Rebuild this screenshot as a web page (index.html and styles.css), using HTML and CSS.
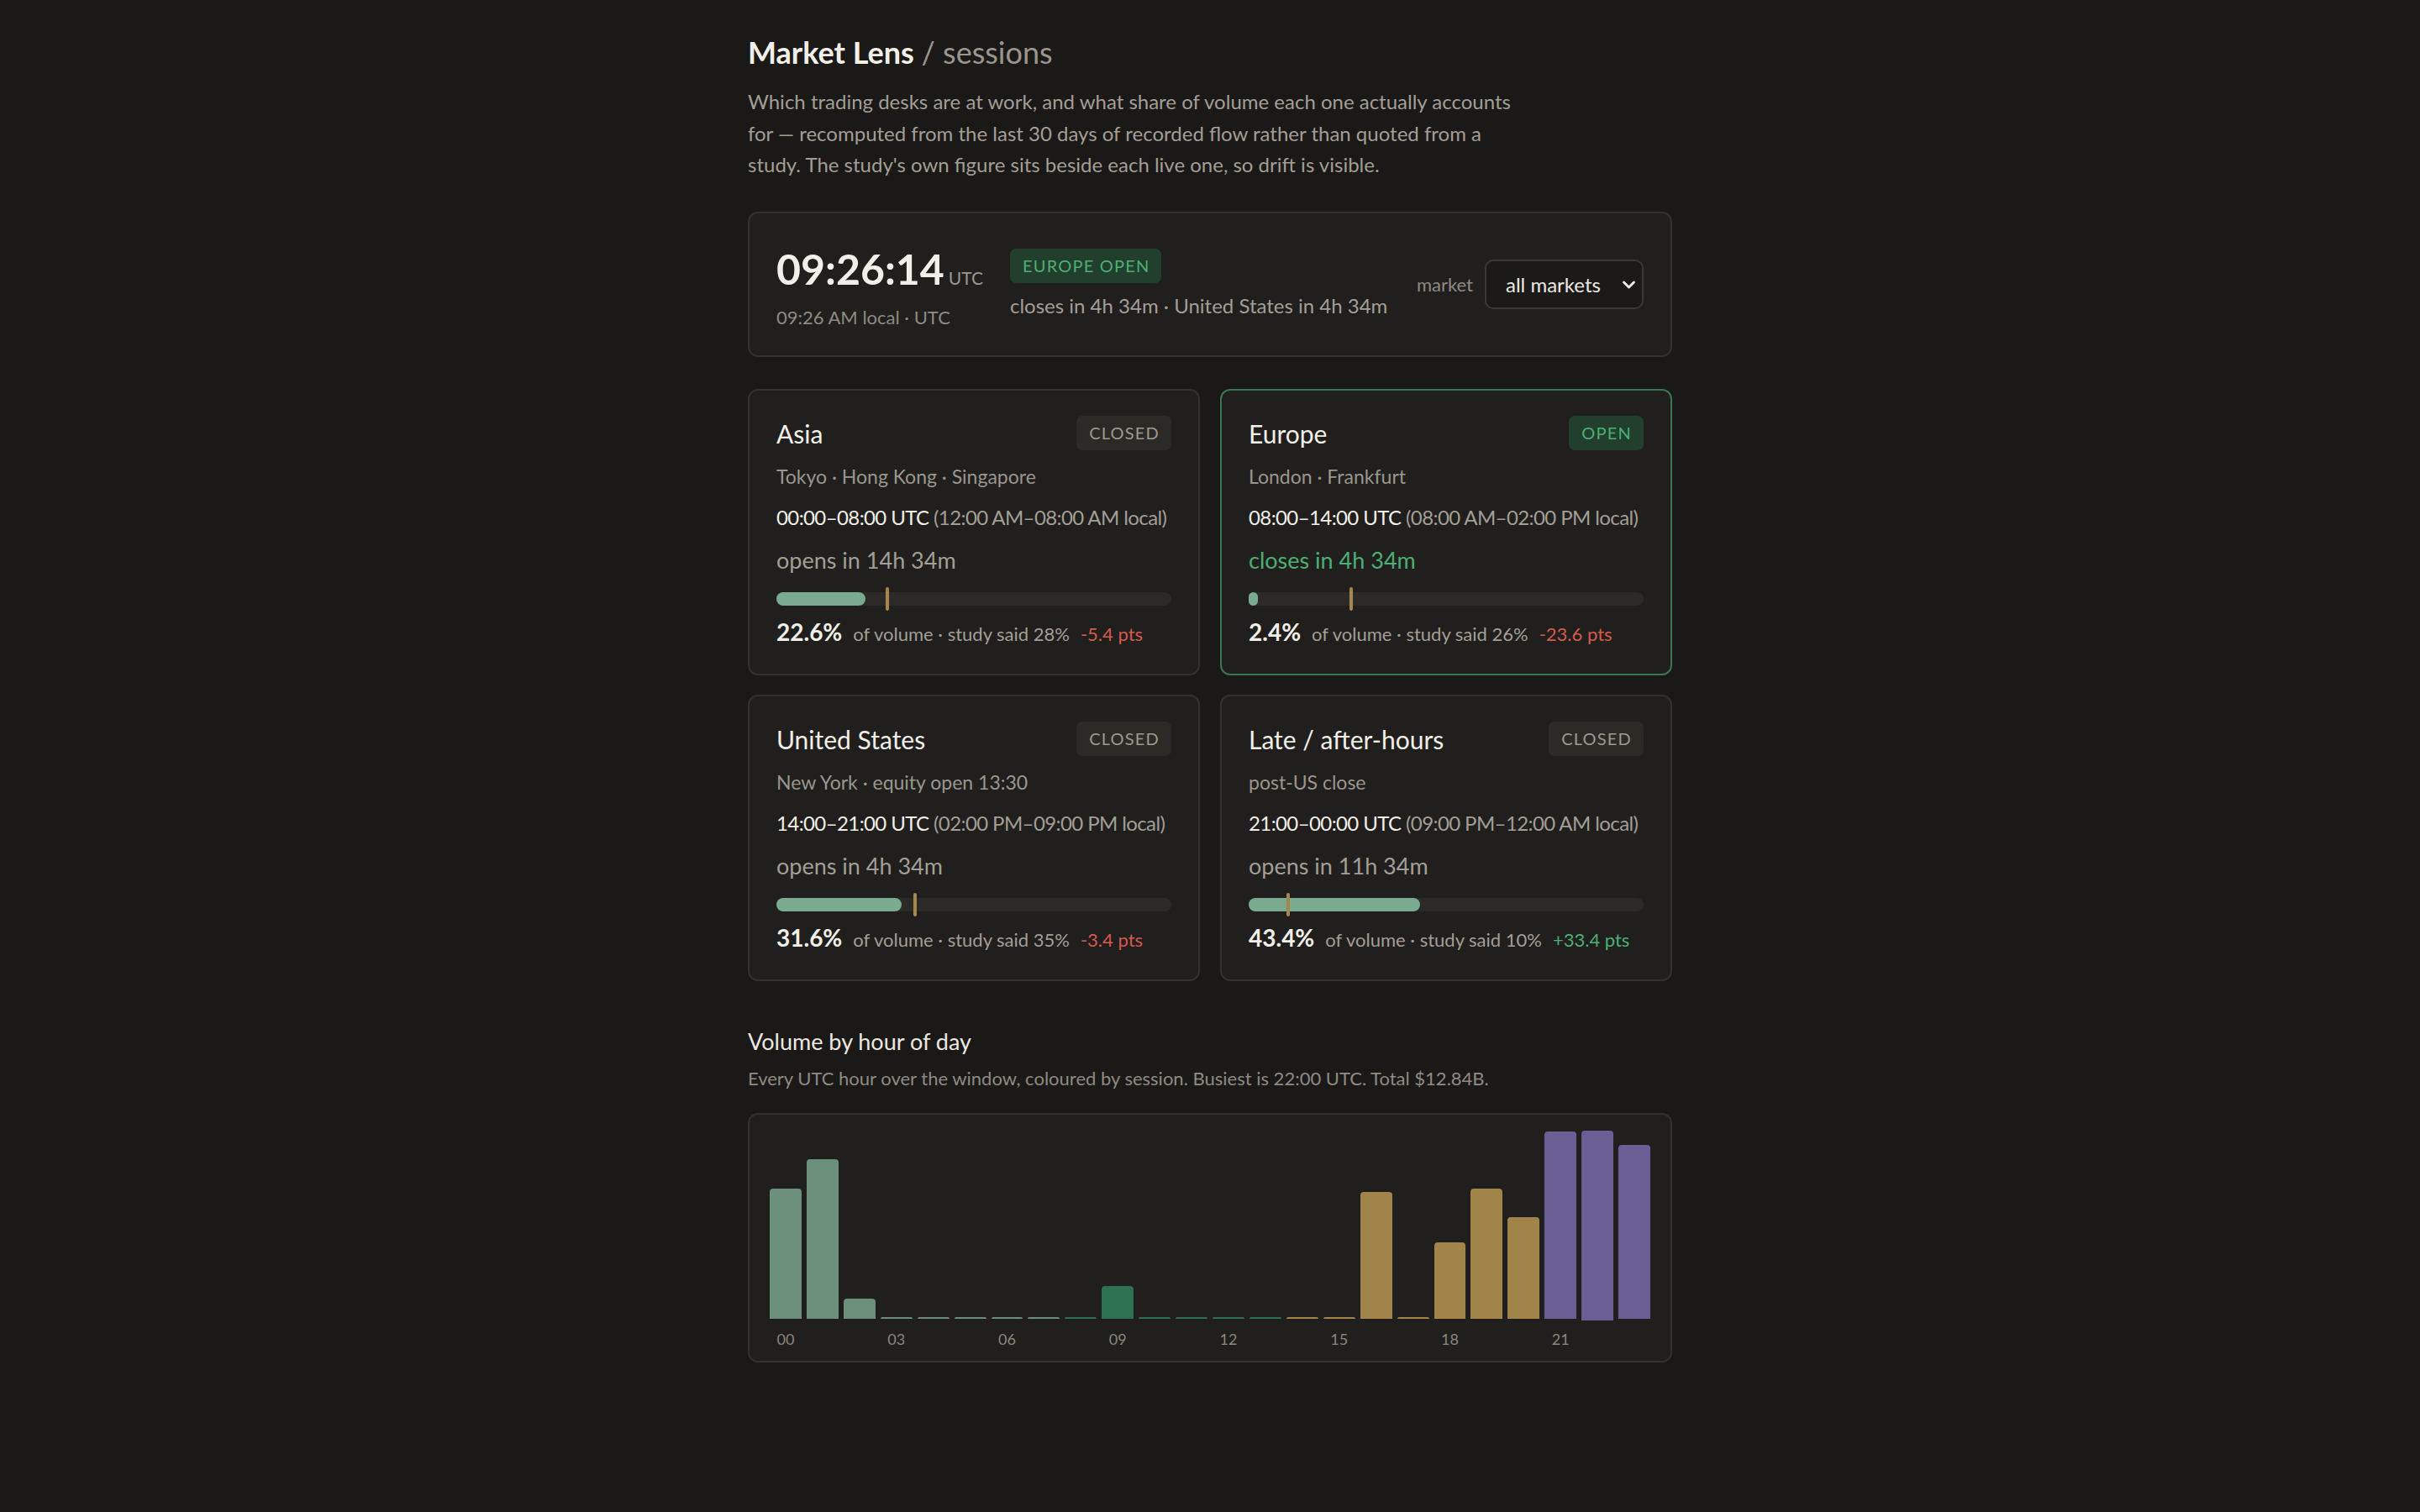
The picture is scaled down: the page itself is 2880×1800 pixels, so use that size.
FILE: index.html
```html
<!DOCTYPE html>
<html lang="en">
<head>
<meta charset="utf-8">
<title>Market Lens / sessions</title>
<link rel="stylesheet" href="styles.css">
</head>
<body>
<main class="page">
  <header class="intro">
    <h1 class="title">Market Lens <span class="title-sub">/ sessions</span></h1>
    <p class="lede">Which trading desks are at work, and what share of volume each one actually accounts for — recomputed from the last 30 days of recorded flow rather than quoted from a study. The study's own figure sits beside each live one, so drift is visible.</p>
  </header>

  <section class="panel clock-panel">
    <div class="clock">
      <div class="clock-time"><span class="clock-digits">09:26:14</span><span class="clock-zone">UTC</span></div>
      <div class="clock-local">09:26 AM local · UTC</div>
    </div>
    <div class="status">
      <span class="badge badge-open">Europe open</span>
      <div class="status-note">closes in 4h 34m · United States in 4h 34m</div>
    </div>
    <label class="market">
      <span class="market-label">market</span>
      <span class="select-wrap">
        <select class="select">
          <option>all markets</option>
          <option>Asia</option>
          <option>Europe</option>
          <option>United States</option>
          <option>Late / after-hours</option>
        </select>
        <svg class="chev" viewBox="0 0 17 12" aria-hidden="true"><path d="M2.5 3 L8.5 9 L14.5 3" fill="none" stroke="#ece8e0" stroke-width="3" stroke-linecap="round" stroke-linejoin="round"/></svg>
      </span>
    </label>
  </section>

  <section class="sessions">
    <article class="panel session">
      <div class="session-head">
        <h2 class="session-name">Asia</h2>
        <span class="badge badge-closed">Closed</span>
      </div>
      <div class="session-where">Tokyo · Hong Kong · Singapore</div>
      <div class="session-hours"><span class="hours-utc">00:00–08:00 UTC</span> (12:00 AM–08:00 AM local)</div>
      <div class="session-next">opens in 14h 34m</div>
      <div class="meter"><div class="meter-fill" style="width:22.6%"></div><div class="meter-mark" style="left:28%"></div></div>
      <div class="session-stat"><span class="stat-value">22.6%</span><span class="stat-text">of volume · study said 28%</span><span class="stat-delta neg">-5.4 pts</span></div>
    </article>

    <article class="panel session session-live">
      <div class="session-head">
        <h2 class="session-name">Europe</h2>
        <span class="badge badge-open">Open</span>
      </div>
      <div class="session-where">London · Frankfurt</div>
      <div class="session-hours"><span class="hours-utc">08:00–14:00 UTC</span> (08:00 AM–02:00 PM local)</div>
      <div class="session-next live">closes in 4h 34m</div>
      <div class="meter"><div class="meter-fill" style="width:2.4%"></div><div class="meter-mark" style="left:26%"></div></div>
      <div class="session-stat"><span class="stat-value">2.4%</span><span class="stat-text">of volume · study said 26%</span><span class="stat-delta neg">-23.6 pts</span></div>
    </article>

    <article class="panel session">
      <div class="session-head">
        <h2 class="session-name">United States</h2>
        <span class="badge badge-closed">Closed</span>
      </div>
      <div class="session-where">New York · equity open 13:30</div>
      <div class="session-hours"><span class="hours-utc">14:00–21:00 UTC</span> (02:00 PM–09:00 PM local)</div>
      <div class="session-next">opens in 4h 34m</div>
      <div class="meter"><div class="meter-fill" style="width:31.6%"></div><div class="meter-mark" style="left:35%"></div></div>
      <div class="session-stat"><span class="stat-value">31.6%</span><span class="stat-text">of volume · study said 35%</span><span class="stat-delta neg">-3.4 pts</span></div>
    </article>

    <article class="panel session">
      <div class="session-head">
        <h2 class="session-name">Late / after-hours</h2>
        <span class="badge badge-closed">Closed</span>
      </div>
      <div class="session-where">post-US close</div>
      <div class="session-hours"><span class="hours-utc">21:00–00:00 UTC</span> (09:00 PM–12:00 AM local)</div>
      <div class="session-next">opens in 11h 34m</div>
      <div class="meter"><div class="meter-fill" style="width:43.4%"></div><div class="meter-mark" style="left:10%"></div></div>
      <div class="session-stat"><span class="stat-value">43.4%</span><span class="stat-text">of volume · study said 10%</span><span class="stat-delta pos">+33.4 pts</span></div>
    </article>
  </section>

  <section class="volume">
    <h2 class="volume-title">Volume by hour of day</h2>
    <p class="volume-note">Every UTC hour over the window, coloured by session. Busiest is 22:00 UTC. Total $12.84B.</p>
    <div class="panel chart">
      <div class="hour"><div class="plot"><div class="bar asia" style="height:68.8%"></div></div><div class="lbl">00</div></div>
      <div class="hour"><div class="plot"><div class="bar asia" style="height:84.8%"></div></div><div class="lbl"></div></div>
      <div class="hour"><div class="plot"><div class="bar asia" style="height:10.7%"></div></div><div class="lbl"></div></div>
      <div class="hour"><div class="plot"><div class="bar asia" style="height:0.5%"></div></div><div class="lbl">03</div></div>
      <div class="hour"><div class="plot"><div class="bar asia" style="height:0.5%"></div></div><div class="lbl"></div></div>
      <div class="hour"><div class="plot"><div class="bar asia" style="height:0.5%"></div></div><div class="lbl"></div></div>
      <div class="hour"><div class="plot"><div class="bar asia" style="height:0.5%"></div></div><div class="lbl">06</div></div>
      <div class="hour"><div class="plot"><div class="bar asia" style="height:0.5%"></div></div><div class="lbl"></div></div>
      <div class="hour"><div class="plot"><div class="bar europe" style="height:0.5%"></div></div><div class="lbl"></div></div>
      <div class="hour"><div class="plot"><div class="bar europe" style="height:17%"></div></div><div class="lbl">09</div></div>
      <div class="hour"><div class="plot"><div class="bar europe" style="height:0.5%"></div></div><div class="lbl"></div></div>
      <div class="hour"><div class="plot"><div class="bar europe" style="height:0.5%"></div></div><div class="lbl"></div></div>
      <div class="hour"><div class="plot"><div class="bar europe" style="height:0.5%"></div></div><div class="lbl">12</div></div>
      <div class="hour"><div class="plot"><div class="bar europe" style="height:0.5%"></div></div><div class="lbl"></div></div>
      <div class="hour"><div class="plot"><div class="bar us" style="height:0.5%"></div></div><div class="lbl"></div></div>
      <div class="hour"><div class="plot"><div class="bar us" style="height:0.5%"></div></div><div class="lbl">15</div></div>
      <div class="hour"><div class="plot"><div class="bar us" style="height:67%"></div></div><div class="lbl"></div></div>
      <div class="hour"><div class="plot"><div class="bar us" style="height:0.5%"></div></div><div class="lbl"></div></div>
      <div class="hour"><div class="plot"><div class="bar us" style="height:40.2%"></div></div><div class="lbl">18</div></div>
      <div class="hour"><div class="plot"><div class="bar us" style="height:68.8%"></div></div><div class="lbl"></div></div>
      <div class="hour"><div class="plot"><div class="bar us" style="height:53.6%"></div></div><div class="lbl"></div></div>
      <div class="hour"><div class="plot"><div class="bar late" style="height:99.5%"></div></div><div class="lbl">21</div></div>
      <div class="hour"><div class="plot"><div class="bar late peak" style="height:100%"></div></div><div class="lbl"></div></div>
      <div class="hour"><div class="plot"><div class="bar late" style="height:92%"></div></div><div class="lbl"></div></div>
    </div>
  </section>
</main>
</body>
</html>
```

FILE: styles.css
```css
* { box-sizing: border-box; }

html, body {
  margin: 0;
  padding: 0;
}

body {
  background: #1a1917;
  color: #efebe4;
  font-family: Lato, "Noto Sans", sans-serif;
  -webkit-font-smoothing: antialiased;
}

.page {
  width: 1100px;
  margin: 0 auto;
  padding: 40px 0 80px;
}

/* header */
.title {
  margin: 0;
  font-size: 36px;
  line-height: 44px;
  font-weight: 700;
  color: #f2efe8;
}

.title-sub {
  font-weight: 400;
  color: #9b968d;
}

.lede {
  margin: 18px 0 0;
  max-width: 940px;
  font-size: 24px;
  line-height: 37.5px;
  color: #a39e95;
}

/* panels */
.panel {
  background: #201f1d;
  border: 2px solid #33312e;
  border-radius: 12px;
}

.clock-panel {
  margin-top: 37px;
  display: flex;
  align-items: center;
  gap: 32px;
  padding: 31px 32px 30px;
}

.clock-time {
  display: flex;
  align-items: baseline;
  height: 70px;
}

.clock-digits {
  font-size: 50px;
  line-height: 70px;
  font-weight: 700;
  color: #f2efe8;
  font-variant-numeric: tabular-nums;
}

.clock-zone {
  margin-left: 5px;
  font-size: 21px;
  line-height: 24px;
  color: #9b968d;
}

.clock-local {
  margin-top: 8px;
  font-size: 22px;
  line-height: 30px;
  color: #8f8a82;
}

.status {
  display: flex;
  flex-direction: column;
  align-items: flex-start;
  gap: 10px;
}

.badge {
  display: inline-block;
  padding: 5px 14px 5px 15px;
  border-radius: 7px;
  font-size: 20px;
  line-height: 31px;
  letter-spacing: 0.06em;
  text-transform: uppercase;
  white-space: nowrap;
}

.badge-open {
  background: #213f2c;
  color: #4dae74;
}

.badge-closed {
  background: #2c2a27;
  color: #9d988f;
}

.status-note {
  font-size: 24px;
  line-height: 34px;
  color: #a39e95;
}

.market {
  margin-left: auto;
  display: flex;
  align-items: center;
  gap: 14px;
}

.market-label {
  font-size: 22px;
  color: #8f8a82;
}

.select-wrap {
  position: relative;
  display: block;
}

.select {
  appearance: none;
  -webkit-appearance: none;
  display: block;
  width: 189px;
  height: 59px;
  padding: 0 40px 0 23px;
  border: 2px solid #3a3834;
  border-radius: 10px;
  background: #1b1a18;
  color: #ece8e0;
  font-family: inherit;
  font-size: 24px;
}

.chev {
  position: absolute;
  right: 9px;
  top: 24px;
  width: 17px;
  height: 12px;
  pointer-events: none;
}

/* session cards */
.sessions {
  margin-top: 38px;
  display: grid;
  grid-template-columns: 1fr 1fr;
  gap: 23px 24px;
}

.session {
  padding: 30px 32px 29px;
}

.session-live {
  border-color: #3a7653;
}

.session-head {
  display: flex;
  align-items: center;
  justify-content: space-between;
  height: 42px;
}

.session-name {
  margin: 0;
  font-size: 30px;
  line-height: 42px;
  font-weight: 400;
  color: #f2efe8;
}

.session-where {
  margin-top: 13px;
  font-size: 23px;
  line-height: 34px;
  color: #9b968d;
}

.session-hours {
  margin-top: 14px;
  font-size: 24px;
  line-height: 36px;
  letter-spacing: -0.6px;
  white-space: nowrap;
  color: #a39e95;
}

.hours-utc {
  color: #f2efe8;
}

.session-next {
  margin-top: 14px;
  font-size: 27px;
  line-height: 38px;
  color: #a39e95;
}

.session-next.live {
  color: #4dae74;
}

.meter {
  position: relative;
  margin-top: 19px;
  height: 16px;
  border-radius: 8px;
  background: #2c2a27;
}

.meter-fill {
  height: 100%;
  border-radius: 8px;
  background: #7aab90;
}

.meter-mark {
  position: absolute;
  top: -6px;
  bottom: -6px;
  width: 4px;
  margin-left: -2px;
  border-radius: 2px;
  background: #a3874c;
}

.session-stat {
  margin-top: 13px;
  display: flex;
  align-items: baseline;
  gap: 13px;
  line-height: 36px;
}

.stat-value {
  font-size: 28px;
  font-weight: 700;
  color: #f2efe8;
}

.stat-text {
  font-size: 22px;
  color: #a39e95;
}

.stat-delta {
  font-size: 22px;
}

.neg { color: #d65a4c; }
.pos { color: #4dae74; }

/* volume chart */
.volume {
  margin-top: 53px;
}

.volume-title {
  margin: 0;
  font-size: 27px;
  line-height: 38px;
  font-weight: 400;
  color: #ece8e0;
}

.volume-note {
  margin: 9px 0 0;
  font-size: 22px;
  line-height: 32px;
  color: #8f8a82;
}

.chart {
  margin-top: 25px;
  padding: 19px 24px 14px;
  display: grid;
  grid-template-columns: repeat(24, 1fr);
  column-gap: 6px;
}

.hour {
  display: flex;
  flex-direction: column;
}

.plot {
  height: 224px;
  display: flex;
  align-items: flex-end;
}

.bar {
  width: 100%;
  min-height: 2px;
  border-radius: 4px 4px 0 0;
}

.bar.asia { background: #6b8f7b; }
.bar.europe { background: #2e7150; }
.bar.us { background: #a0844a; }
.bar.late { background: #6a5f95; }
.bar.peak { box-shadow: 0 2px 0 #6a5f95; }

.lbl {
  margin-top: 12px;
  height: 24px;
  font-size: 18px;
  line-height: 24px;
  text-align: center;
  color: #8a857d;
}
```
